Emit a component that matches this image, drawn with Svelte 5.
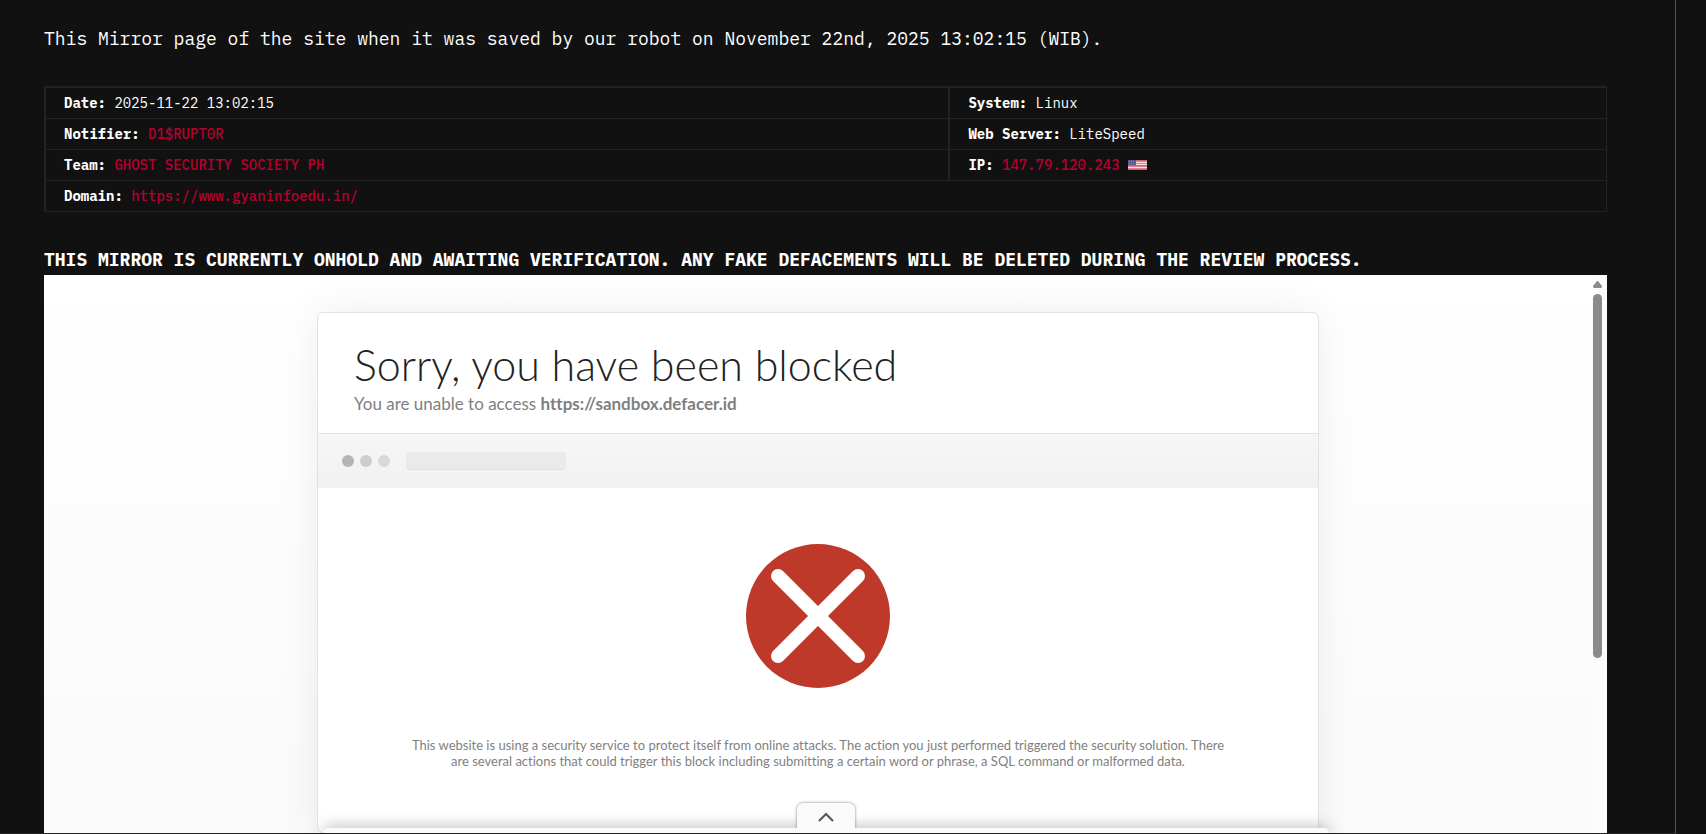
<script lang="ts">
  let expanded = $state(false);

  const dots = ["dark", "mid", "light"];
</script>

<main>
  <p class="intro">
    This Mirror page of the site when it was saved by our robot on November 22nd, 2025 13:02:15 (WIB).
  </p>

  <table>
    <tbody>
      <tr>
        <td class="wide"><strong>Date:</strong> 2025-11-22 13:02:15</td>
        <td><strong>System:</strong> Linux</td>
      </tr>
      <tr>
        <td><strong>Notifier:</strong> <a href="#notifier">D1$RUPT0R</a></td>
        <td><strong>Web Server:</strong> LiteSpeed</td>
      </tr>
      <tr>
        <td><strong>Team:</strong> <a href="#team">GHOST SECURITY SOCIETY PH</a></td>
        <td>
          <strong>IP:</strong> <a href="#ip">147.79.120.243</a>
          <svg class="flag" viewBox="0 0 19 10" role="img" aria-label="United States">
            <rect width="19" height="10" fill="#dd7f8d" />
            <path d="M8 2.5h11M8 4.5h11M0 7.5h19" stroke="#f7e4e7" />
            <path d="M8 .5h11M0 5.5h19M0 9.5h19" stroke="#cf6474" />
            <rect width="8" height="5" fill="#5c5a8c" />
            <path d="M1 1.5h6M1 3.5h6" stroke="#8583aa" stroke-dasharray="1 1" />
          </svg>
        </td>
      </tr>
      <tr>
        <td colspan="2"><strong>Domain:</strong> <a href="#domain">https://www.gyaninfoedu.in/</a></td>
      </tr>
    </tbody>
  </table>

  <h1>THIS MIRROR IS CURRENTLY ONHOLD AND AWAITING VERIFICATION. ANY FAKE DEFACEMENTS WILL BE DELETED DURING THE REVIEW PROCESS.</h1>

  <section class="frame">
    <div class="view">
      <article class="card">
        <header>
          <h2>Sorry, you have been blocked</h2>
          <p>You are unable to access <strong>https://sandbox.defacer.id</strong></p>
        </header>
        <div class="browser">
          {#each dots as dot}
            <span class="dot {dot}"></span>
          {/each}
          <span class="address"></span>
        </div>
        <div class="message">
          <svg class="cross" viewBox="0 0 144 144" aria-hidden="true">
            <circle cx="72" cy="72" r="72" fill="#bf392b" />
            <path d="M32 32l80 80M112 32l-80 80" stroke="#fff" stroke-width="14" stroke-linecap="round" />
          </svg>
          <p>
            This website is using a security service to protect itself from online attacks. The action you just performed triggered the security solution. There
            are several actions that could trigger this block including submitting a certain word or phrase, a SQL command or malformed data.
          </p>
        </div>
      </article>
    </div>

    <div class="scrollbar" aria-hidden="true">
      <svg viewBox="0 0 9 7"><path d="M4 0h1l4 5v1l-1 1H1L0 6V5z" fill="#8b8b8b" /></svg>
      <div class="thumb"></div>
    </div>

    <div class="drawer">
      <button aria-label="Show panel" aria-expanded={expanded} onclick={() => (expanded = !expanded)}>
        <svg viewBox="0 0 16 10"><path d="M1 9l7-7 7 7" fill="none" stroke="#555" stroke-width="2" /></svg>
      </button>
      <div class="panel"></div>
    </div>
  </section>
</main>

<style>
  :global(body) {
    background: #111;
  }

  main {
    box-sizing: border-box;
    height: 100vh;
    display: flex;
    flex-direction: column;
    margin-right: 30px;
    padding: 26px 68px 0 44px;
    border-right: 1px solid #555;
    border-bottom: 1px solid #222;
    color: #fff;
    font-family: "IBM Plex Mono", "Liberation Mono", monospace;
    font-size: 14px;
  }

  .intro {
    margin: 0 0 34px;
    font-size: 18px;
    line-height: 26px;
  }

  table {
    border: 1px solid #222;
    border-width: 1px 0 0 1px;
    border-spacing: 0;
  }

  td {
    padding: 4px 18px;
    border: 1px solid #222;
    border-top: 0;
    line-height: 22px;
  }

  tr:first-child td {
    border-top: 1px solid #222;
  }

  .wide {
    width: 57.9%;
    box-sizing: border-box;
  }

  a {
    color: #b8002f;
    font-weight: 500;
    text-decoration: none;
  }

  .flag {
    width: 19px;
    height: 10px;
  }

  h1 {
    margin: 34px 0 2px;
    font-size: 18px;
    line-height: 27px;
  }

  .frame {
    position: relative;
    flex: 1;
    min-height: 0;
    display: flex;
    overflow: hidden;
    background: linear-gradient(#fff, #fafafa);
    font-family: Lato, sans-serif;
    font-variant-ligatures: none;
  }

  .view {
    flex: 1;
    padding-top: 37px;
  }

  .card {
    box-sizing: border-box;
    max-width: 1002px;
    min-height: 100%;
    margin: 0 auto;
    border: 1px solid #e2e2e2;
    border-radius: 6px;
    background: #fff;
    box-shadow: 0 0 40px rgba(0, 0, 0, 0.07);
  }

  header {
    padding: 25px 36px 17px;
    border-bottom: 1px solid #e2e2e2;
  }

  h2 {
    margin: 0;
    color: #222;
    font-size: 43px;
    font-weight: 300;
    line-height: 54px;
  }

  header p {
    margin: 0;
    color: #7f7f7f;
    font-size: 17px;
    line-height: 24px;
  }

  .browser {
    display: flex;
    align-items: center;
    gap: 6px;
    height: 54px;
    padding-left: 24px;
    background: linear-gradient(#f6f6f6, #f1f1f1);
  }

  .dot {
    width: 12px;
    height: 12px;
    border-radius: 50%;
  }

  .dark {
    background: #b4b4b4;
  }

  .mid {
    background: #cecece;
  }

  .light {
    background: #d8d8d8;
  }

  .address {
    width: 160px;
    height: 18px;
    margin-left: 10px;
    border-radius: 4px;
    background: #eaeaea;
    box-shadow: inset 0 -1px #e2e2e2;
  }

  .message {
    padding: 56px 90px;
    text-align: center;
  }

  .cross {
    display: block;
    width: 144px;
    height: 144px;
    margin: 0 auto;
  }

  .message p {
    margin: 49px 0 0;
    color: #7f7f7f;
    font-size: 13px;
    line-height: 16px;
  }

  .scrollbar {
    width: 15px;
    box-sizing: border-box;
    padding: 6px 5px 0 1px;
    background: #fcfcfc;
  }

  .scrollbar svg {
    display: block;
    width: 9px;
    height: 7px;
  }

  .thumb {
    width: 9px;
    height: 66%;
    margin-top: 6px;
    border-radius: 5px;
    background: #8b8b8b;
  }

  /* pull-up drawer pinned over the bottom of the frame */
  .drawer {
    position: absolute;
    left: 0;
    right: 0;
    bottom: 0;
    display: flex;
    flex-direction: column;
    align-items: center;
  }

  button {
    display: flex;
    justify-content: center;
    width: 58px;
    height: 25px;
    padding: 9px 0 0;
    border: 0;
    border-radius: 6px 6px 0 0;
    background: #fafafa;
    box-shadow: 0 0 3px rgba(0, 0, 0, 0.5);
    cursor: pointer;
    z-index: 1;
    clip-path: inset(-4px -4px 0);
  }

  button svg {
    width: 16px;
    height: 10px;
  }

  .panel {
    width: 100%;
    max-width: 1006px;
    height: 5px;
    border-radius: 6px 6px 0 0;
    background: #fafafa;
    box-shadow: 0 0 14px rgba(0, 0, 0, 0.5);
  }
</style>
